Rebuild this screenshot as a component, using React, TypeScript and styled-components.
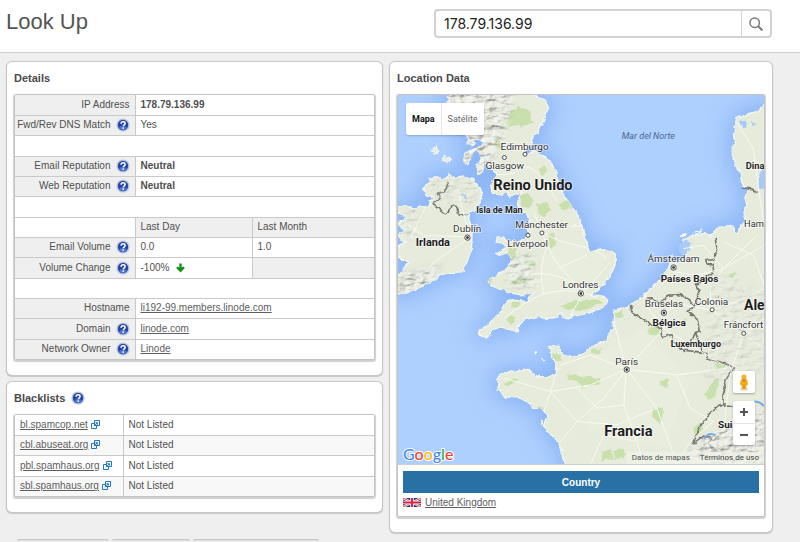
import React from "react";
import styled, { createGlobalStyle } from "styled-components";

const GlobalStyle = createGlobalStyle`
  * { box-sizing: border-box; }
  body {
    margin: 0;
    background: #efefef;
    color: #505050;
    font-family: "Liberation Sans", Arial, sans-serif;
    font-size: 10px;
    overflow: hidden;
  }
`;

const Header = styled.header`
  display: flex;
  justify-content: space-between;
  align-items: flex-start;
  height: 53px;
  padding: 9px 28px 0 6px;
  background: #fff;
  border-bottom: 1px solid #cfcfcf;
`;

const PageTitle = styled.h1`
  margin: 0;
  font-size: 22px;
  line-height: 26px;
  font-weight: 400;
  color: #555;
`;

const SearchForm = styled.form`
  display: flex;
  width: 338px;
  height: 29px;
  border: 2px solid #d2d2d2;
  border-radius: 4px;
  background: #fff;
`;

const SearchInput = styled.input`
  flex: 1;
  min-width: 0;
  padding: 0 8px;
  border: 0;
  outline: 0;
  background: none;
  color: #222;
  font: 14px Inter, sans-serif;
`;

const SearchButton = styled.button`
  display: flex;
  align-items: center;
  justify-content: center;
  width: 29px;
  padding: 0;
  border: 0;
  border-left: 1px solid #d2d2d2;
  background: none;
`;

const Columns = styled.main`
  display: grid;
  grid-template-columns: 375fr 382fr;
  align-items: start;
  gap: 8px;
  padding: 9px 28px 0 7px;
`;

const Stack = styled.div`
  display: flex;
  flex-direction: column;
  gap: 7px;
`;

const Panel = styled.section`
  padding: 0 7px 15px;
  background: #fff;
  border-radius: 5px;
  box-shadow: 0 0 1px 1px #c6c6c6, 0 1px 1px 1px #c6c6c6;
`;

const PanelTitle = styled.h2`
  display: flex;
  align-items: center;
  gap: 6px;
  height: 32px;
  margin: 0;
  font-size: 11px;
  font-weight: 700;
  color: #4a4a4a;
`;

const Frame = styled.div`
  border: 1px solid #c4c4c4;
  border-radius: 2px;
  box-shadow: 0 1px 1px 1px #d0d0d0;
  overflow: hidden;
`;

const Table = styled.table`
  width: 100%;
  table-layout: fixed;
  border-collapse: collapse;
  line-height: 14px;

  tr { height: 20px; }
  tr:nth-child(3n) { height: 21px; }
  tr + tr > * { border-top: 1px solid #c9c9c9; }
`;

const LabelCell = styled.th`
  padding: 0 5px;
  background: #efefef;
  font-weight: 400;
  text-align: right;
  white-space: nowrap;
`;

const LabelContent = styled.span`
  display: flex;
  align-items: center;
  justify-content: flex-end;
  gap: 5px;
`;

const Cell = styled.td<{ $shaded?: boolean; $bold?: boolean }>`
  padding: 0 5px;
  border-left: 1px solid #c9c9c9;
  background: ${(p) => (p.$shaded ? "#efefef" : "transparent")};
  font-weight: ${(p) => (p.$bold ? 700 : 400)};
`;

const HeadCell = styled.th`
  padding: 0 5px;
  border-left: 1px solid #c9c9c9;
  background: #efefef;
  font-weight: 400;
  text-align: left;
`;

const BlankCell = styled.td`
  padding: 0;
`;

const ListRow = styled.tr<{ $striped: boolean }>`
  background: ${(p) => (p.$striped ? "#f8f8f8" : "#fff")};
`;

const ListName = styled.th`
  padding: 0 5px;
  font-weight: 400;
  text-align: left;
  white-space: nowrap;

  svg { margin-left: 3px; vertical-align: -1px; }
`;

const Link = styled.a`
  color: #606060;
  text-decoration: underline;
`;

const HelpButton = styled.button`
  display: inline-flex;
  padding: 0;
  border: 0;
  background: none;
`;

const Change = styled.span`
  display: flex;
  align-items: center;
  gap: 7px;
`;

const MapBox = styled.div`
  position: relative;
  height: 370px;
  border-bottom: 1px solid #cfcfcf;
  background: #aed0ff;
  font-family: Roboto, sans-serif;
`;

const MapSvg = styled.svg`
  display: block;
  width: 100%;
  height: 100%;
`;

const MapTypes = styled.div`
  position: absolute;
  top: 8px;
  left: 8px;
  display: flex;
  height: 32px;
  background: #fff;
  border-radius: 2px;
  box-shadow: 0 1px 2px rgba(0, 0, 0, 0.2);
`;

const MapType = styled.button<{ $active?: boolean }>`
  padding: 0 6px;
  border: 0;
  background: none;
  font: ${(p) => (p.$active ? 700 : 400)} 9px Roboto, sans-serif;
  color: ${(p) => (p.$active ? "#111" : "#666")};

  & + & { border-left: 1px solid #e8e8e8; }
`;

const MapTools = styled.div`
  position: absolute;
  right: 9px;
  bottom: 19px;
  display: flex;
  flex-direction: column;
  gap: 8px;
`;

const ToolGroup = styled.div`
  display: flex;
  flex-direction: column;
  background: #fff;
  border-radius: 2px;
  box-shadow: 0 1px 2px rgba(0, 0, 0, 0.3);
`;

const ToolButton = styled.button`
  display: flex;
  align-items: center;
  justify-content: center;
  width: 22px;
  height: 22px;
  padding: 0;
  border: 0;
  background: none;

  & + & { border-top: 1px solid #e6e6e6; }
`;

const MapTerms = styled.div`
  position: absolute;
  right: 0;
  bottom: 0;
  display: flex;
  gap: 10px;
  padding: 0 5px;
  background: rgba(240, 242, 232, 0.7);
  font-size: 8px;
  line-height: 12px;
`;

const TermsLink = styled.a`
  color: #444;
  text-decoration: none;
`;

const CountryBlock = styled.div`
  padding: 6px 5px 5px;
`;

const CountryTable = styled.table`
  width: 100%;
  border-collapse: collapse;

  th {
    height: 22px;
    padding: 0;
    background: #2871a5;
    color: #fff;
    font-size: 10px;
  }

  td { height: 18px; padding: 0; }
`;

const Country = styled.span`
  display: flex;
  align-items: center;
  gap: 4px;
`;

const TabStrip = styled.nav`
  display: grid;
  grid-template-columns: 92px 78px 126px;
  gap: 3px;
  padding: 7px 17px 0;
`;

const TabTop = styled.div`
  height: 2px;
  border-top: 1px solid #c8c8c8;
  border-radius: 3px 3px 0 0;
  background: #dedede;
`;

function Help({ topic }: { topic: string }) {
  return (
    <HelpButton type="button" aria-label={`Help: ${topic}`}>
      <svg width="14" height="14" viewBox="0 0 14 14">
        <circle cx="7" cy="7" r="6.6" fill="#b9c6e3" />
        <circle cx="7" cy="7" r="5.2" fill="#2645a3" />
        <ellipse cx="7" cy="10" rx="3.6" ry="1.9" fill="#4f77cf" />
        <path d="M5.1 5.7c0-1.2.8-1.9 2-1.9s2 .7 2 1.7c0 1.3-1.8 1.4-1.8 2.7" fill="none" stroke="#fff" strokeWidth="1.5" />
        <circle cx="7.2" cy="10.1" r=".9" fill="#fff" />
      </svg>
    </HelpButton>
  );
}

function ExternalIcon() {
  return (
    <svg width="9" height="9" viewBox="0 0 9 9" fill="none" stroke="#1f78c8" aria-hidden="true">
      <path d="M3.5.5h5v5h-5zM3 3.5H.5v5h5V6" />
      <path d="M3 6.2 6.2 3M4.4 2.7h2v2" />
    </svg>
  );
}

function DownArrow() {
  return (
    <svg width="9" height="10" viewBox="0 0 9 10" aria-hidden="true">
      <path d="M3.3.5h2.4v4L7.4 3.6 8.8 5 4.5 9.5.2 5l1.4-1.4 1.7.9z" fill="#149014" />
    </svg>
  );
}

function Flag() {
  return (
    <svg width="18" height="9" viewBox="0 0 18 9" aria-hidden="true">
      <path d="M0 0h18v9H0z" fill="#26357f" />
      <path d="m0 0 18 9M18 0 0 9" stroke="#fff" strokeWidth="2.2" />
      <path d="m0 0 18 9M18 0 0 9" stroke="#d33a4f" strokeWidth=".9" />
      <path d="M9 0v9M0 4.5h18" stroke="#fff" strokeWidth="3.4" />
      <path d="M9 0v9M0 4.5h18" stroke="#d2233c" strokeWidth="1.9" />
    </svg>
  );
}

const LAND = [
  // Great Britain
  "M160 10 178 32 166 48 186 62 176 80 200 96 190 118 222 132 238 150 228 162 250 152 262 150 284 162 262 176 236 186 222 196 216 214 228 224 244 204 252 184 262 190 270 206 258 232 262 256 276 244 284 222 294 226 302 240 316 256 306 276 300 290 304 312 330 318 346 312 360 324 386 312 398 306 386 326 380 346 392 366 410 376 416 396 408 414 416 436 404 452 380 462 354 458 342 444 320 446 316 462 336 468 348 476 330 486 316 496 330 500 350 490 360 502 358 526 344 548 318 560 290 576 298 590 318 598 344 606 372 614 392 622 412 616 430 608 420 622 410 640 378 636 350 638 340 652 328 672 304 696 284 714 264 726 264 740 290 744 308 724 332 716 356 722 376 728 384 706 404 694 438 684 464 690 492 688 508 676 530 688 566 680 610 670 646 652 654 634 640 624 604 618 620 606 642 584 660 560 674 530 675 500 660 486 624 482 598 492 590 482 594 468 580 440 576 416 540 410 570 412 570 396 552 362 530 334 512 306 500 266 492 238 476 214 452 196 424 188 404 196 390 190 412 176 430 164 422 150 440 134 460 94 476 52 468 32 440 22 420 10Z",
  // Ireland
  "M174 256 190 270 216 264 248 272 262 296 272 312 268 342 246 366 232 372 236 398 244 430 242 480 230 520 214 550 180 552 146 560 116 582 80 600 44 614 10 618 10 560 34 548 54 520 22 506 18 480 42 462 22 440 40 424 18 404 48 390 26 372 10 360 40 352 72 358 108 352 128 326 104 316 98 296 118 284 112 268 138 264 156 270Z",
  // Continent
  "M1130 40 1110 62 1072 76 1042 86 1032 112 1034 150 1026 190 1034 232 1050 246 1054 280 1072 300 1066 326 1074 350 1060 370 1068 396 1052 412 1044 438 1022 410 984 416 962 440 944 434 906 440 882 456 874 476 888 496 870 520 850 526 846 500 834 540 814 572 790 590 770 614 720 650 670 666 668 716 648 756 590 782 576 800 548 808 516 800 508 774 476 774 484 800 496 830 494 860 462 866 436 864 420 848 398 842 374 852 338 854 314 872 330 886 318 906 344 926 378 930 408 938 430 958 462 966 470 984 458 1010 474 1034 494 1050 514 1084 516 1110 532 1140 1130 1140Z",
  // Islands
  "M160 200l22 8-10 14-14-8Z M120 184l14-10 10 14-14 8Z M450 1000l5 3-4 4Z M455 812l10 2-4 4Z M432 790l6 1-3 5Z M868 444l18-10-8 12Z M912 430l20-6-6 8Z M232 166l18-8-6 16Z",
];

const PARKS =
  "M345 98 360 70 384 52 420 66 422 104 390 112 356 108Z M314 156 330 152 334 178 314 180Z M390 318 412 312 430 340 412 362 390 346Z M440 346 470 340 480 362 462 386 442 372Z M508 346 528 332 546 352 530 366 508 362Z M444 242 462 232 470 252 452 262Z M474 436 494 430 496 470 478 480Z M350 480 376 478 372 508 352 512Z M400 520 430 514 436 530 410 538Z M360 576 400 566 412 582 372 590Z M362 640 392 640 388 656 364 654Z M348 684 372 680 376 700 356 712Z M508 650 560 636 600 640 584 664 530 664Z M572 640 620 628 640 640 590 662Z M482 790 508 800 516 818 494 818Z M528 858 570 862 598 878 574 900 560 878 532 872Z M338 884 376 868 380 878 344 896Z M440 956 460 960 454 974 442 968Z M570 870 600 866 636 872 626 892 580 894Z M672 670 700 668 696 690 676 690Z M774 718 806 716 800 742 776 738Z M812 874 834 876 830 896 814 892Z M790 960 818 958 816 1006 788 994Z M942 920 960 890 986 868 980 914 956 940Z M978 826 1004 822 1000 844 980 844Z M632 1090 660 1084 668 1112 636 1118Z M666 1086 700 1082 704 1110 672 1112Z M600 784 632 780 622 798 604 796Z M290 570 306 568 302 582 292 582Z M910 1020 940 1000 936 1030 916 1050Z M870 700 890 690 886 716Z M1010 560 1040 556 1030 574Z";

const ROADS =
  "M430 370Q450 420 470 470T540 570T578 612 M300 250Q350 270 390 240T500 340 M455 430Q500 460 560 470T650 510 M400 560Q480 540 560 590 M340 690Q400 640 450 620T570 610 M470 470Q440 540 460 620 M580 612L660 520 M580 612 540 680 M580 612 640 640 M500 540 590 500 M240 445 100 440 40 400 M240 445 130 520 80 590 M200 300 235 440 M60 450 110 340 M708 843 600 800 510 830 M708 843 670 700 M708 843 820 720 840 640 M708 843 860 860 1010 840 M708 843 800 960 860 1128 M708 843 640 930 560 1000 510 1060 M708 843 700 950 740 1060 760 1128 M480 910 600 890 708 843 M340 870 480 910 460 970 M480 910 560 1000 M480 910 500 840 M560 1000 680 1010 800 960 M600 1128 640 1040 740 1060 M860 1128 900 1060 970 1000 M820 720 760 640 M820 720 900 770 1000 830 M850 550 920 560 1000 540 1122 470 M966 665 1060 740 1122 780 M966 665 960 600 1000 540 1100 440 M966 665 880 650 820 670 M1060 740 1020 860 1010 940 1000 1040 M1000 540 940 470 880 480 M1122 600 1040 640 966 665 M1060 740 1122 690 M1040 100 1090 180 1110 330 1122 400 M1000 460 1090 500 1122 590 M860 860 900 960 970 1000 M560 900 620 960 700 950";

const BORDERS =
  "M172 280 164 306 140 314 146 328 124 342 150 364 166 376 176 370 180 348 196 350 206 380 230 376 M975 445 980 480 974 510 950 512 952 526 970 530 974 546 958 560 930 576 916 590 926 610 914 650 M766 630 782 628 796 640 824 636 836 620 870 618 898 634 914 660 M720 650 724 670 742 682 760 696 786 710 810 718 816 750 846 738 846 760 880 786 942 792 954 810 1004 826 1033 836 1012 864 1000 906 998 950 972 960 950 986 926 1024 912 1058 916 1066 M914 650 894 672 908 684 926 696 930 728 916 732 902 762 886 768 M916 732 926 760 934 788 M998 950 1030 952 M908 1066 940 1044 962 1048 956 1070 974 1090 M1058 298 1085 300 1102 310";

interface Label { text: string; x: number; y: number; size: number; bold?: boolean; italic?: boolean }

const LABELS: Label[] = [
  { text: "Edimburgo", x: 402, y: 183, size: 30 },
  { text: "Glasgow", x: 342, y: 241, size: 30 },
  { text: "Reino Unido", x: 427, y: 303, size: 44, bold: true },
  { text: "Isla de Man", x: 326, y: 374, size: 27, bold: true },
  { text: "Mánchester", x: 453, y: 419, size: 30 },
  { text: "Dublín", x: 229, y: 430, size: 30 },
  { text: "Irlanda", x: 126, y: 473, size: 33, bold: true },
  { text: "Liverpool", x: 411, y: 475, size: 30 },
  { text: "Mar del Norte", x: 774, y: 150, size: 27, italic: true },
  { text: "Ámsterdam", x: 850, y: 521, size: 30 },
  { text: "Países Bajos", x: 898, y: 581, size: 30, bold: true },
  { text: "Bruselas", x: 821, y: 657, size: 30 },
  { text: "Colonia", x: 964, y: 651, size: 30 },
  { text: "Bélgica", x: 837, y: 713, size: 30, bold: true },
  { text: "Luxemburgo", x: 917, y: 776, size: 27, bold: true },
  { text: "Londres", x: 570, y: 599, size: 30 },
  { text: "París", x: 709, y: 829, size: 30 },
  { text: "Francia", x: 714, y: 1043, size: 44, bold: true },
];

const EDGE_LABELS: Label[] = [
  { text: "Dina", x: 1067, y: 241, size: 28, bold: true },
  { text: "Ham", x: 1062, y: 414, size: 28 },
  { text: "Ale", x: 1062, y: 665, size: 42, bold: true },
  { text: "Fráncfort", x: 1001, y: 720, size: 29 },
  { text: "Sui", x: 984, y: 1021, size: 30, bold: true },
];

const CITIES = [[341, 206], [403, 196], [412, 440], [454, 433], [966, 664], [1061, 735]];
const CAPITALS = [[230, 447], [571, 615], [850, 537], [821, 673], [709, 844]];

function MapLabel({ label, anchor }: { label: Label; anchor: "start" | "middle" }) {
  return (
    <text
      x={label.x}
      y={label.y}
      fontSize={label.size}
      fontWeight={label.bold ? 700 : 400}
      fontStyle={label.italic ? "italic" : "normal"}
      textAnchor={anchor}
      fill={label.italic ? "#4e6690" : label.bold ? "#1d1d1d" : "#333"}
      stroke={label.italic ? "none" : "#fff"}
      strokeOpacity=".7"
      strokeWidth="5"
      paintOrder="stroke"
    >
      {label.text}
    </text>
  );
}

function EuropeMap() {
  return (
    <MapSvg viewBox="21 18 1101 1110" preserveAspectRatio="xMidYMid slice" role="img" aria-label="Mapa">
      <defs>
        <filter id="coast" x="-10%" y="-10%" width="120%" height="120%">
          <feTurbulence type="fractalNoise" baseFrequency="0.05" numOctaves="3" seed="4" />
          <feDisplacementMap in="SourceGraphic" scale="16" xChannelSelector="R" yChannelSelector="G" />
        </filter>
        <filter id="shelf" x="-10%" y="-10%" width="120%" height="120%">
          <feGaussianBlur stdDeviation="34" />
        </filter>
        <filter id="relief" x="0" y="0" width="100%" height="100%">
          <feTurbulence type="fractalNoise" baseFrequency="0.03 0.06" numOctaves="4" seed="9" result="n" />
          <feDiffuseLighting in="n" surfaceScale="16" lightingColor="#fff" result="l">
            <feDistantLight azimuth="225" elevation="55" />
          </feDiffuseLighting>
          <feComposite in="l" in2="SourceGraphic" operator="in" />
        </filter>
        <filter id="feather"><feGaussianBlur stdDeviation="9" /></filter>
        <mask id="highlands">
          <g fill="#fff" filter="url(#feather)">
            <path d="M140 0H370L350 110 300 220 250 260 200 170Z" />
            <path d="M350 500 430 500 440 600 350 600Z" opacity=".7" />
            <path d="M20 560 160 530 90 610 20 630Z" opacity=".9" />
            <path d="M20 360 90 360 70 450 20 450Z" opacity=".4" />
            <path d="M900 1080 1000 1020 1130 960V1140H900Z" />
            <path d="M960 540 1130 620V880H940Z" opacity=".25" />
            <path d="M120 260 270 270 260 350 130 340Z" opacity=".35" />
          </g>
        </mask>
        <clipPath id="landClip">{LAND.map((d) => <path key={d} d={d} />)}</clipPath>
      </defs>
      <path d="M0 0h1150v1150H0Z" fill="#aed0ff" />
      <g filter="url(#shelf)" fill="#7faaf0" stroke="#7faaf0" strokeWidth="30" opacity=".75">
        {LAND.slice(0, 3).map((d) => <path key={d} d={d} />)}
      </g>
      <g filter="url(#coast)">
        {LAND.map((d) => <path key={d} d={d} fill="#e6ebdb" stroke="#f4f7f0" strokeWidth="4" strokeLinejoin="round" />)}
        <g clipPath="url(#landClip)">
          <path d="M560 470 650 500 600 600 480 630 420 590 480 470Z M560 830 760 720 900 880 820 1080 600 1020Z" fill="#e9edde" />
          <path d={PARKS} fill="#c9e0ac" />
        </g>
        <path d="M214 316 228 318 226 334 214 330Z M868 470 886 456 904 464 898 484 878 500 866 490Z M1050 100 1066 92 1072 110 1058 118Z M1082 96 1102 104 1092 116Z M1108 258 1125 230V300L1104 300Z" fill="#a5cafb" />
        <path d={BORDERS} fill="none" stroke="#777972" strokeWidth="5" strokeLinejoin="round" />
      </g>
      <g clipPath="url(#landClip)">
        <path d={ROADS} fill="none" stroke="#f8faf2" strokeWidth="3" />
        <g mask="url(#highlands)">
          <path d="M0 0h1150v1150H0Z" filter="url(#relief)" opacity=".5" />
        </g>
      </g>
      <path d="M942 1052q14-22 34-10M1092 940q18 0 30 14" fill="none" stroke="#7aa7e8" strokeWidth="6" />
      <g fill="#fff" stroke="#4a4a4a" strokeWidth="3">
        {CITIES.map(([x, y]) => <circle key={x} cx={x} cy={y} r="6" />)}
        {CAPITALS.map(([x, y]) => <circle key={x} cx={x} cy={y} r="8" />)}
      </g>
      {CAPITALS.map(([x, y]) => <circle key={x} cx={x} cy={y} r="4" fill="#222" />)}
      {LABELS.map((l) => <MapLabel key={l.text} label={l} anchor="middle" />)}
      {EDGE_LABELS.map((l) => <MapLabel key={l.text} label={l} anchor="start" />)}
    </MapSvg>
  );
}

const GoogleMark = styled.div`
  position: absolute;
  left: 5px;
  bottom: 0;
  font: 500 16px/21px Lato, sans-serif;
  -webkit-text-stroke: 2px #fff;
  paint-order: stroke fill;
`;

const Letter = styled.span<{ $color: string }>`
  color: ${(p) => p.$color};
`;

const GOOGLE: [string, string][] = [
  ["G", "#4285f4"], ["o", "#ea4335"], ["o", "#fbbc05"], ["g", "#4285f4"], ["l", "#34a853"], ["e", "#ea4335"],
];

function LocationMap() {
  return (
    <MapBox>
      <EuropeMap />
      <MapTypes>
        <MapType type="button" $active>Mapa</MapType>
        <MapType type="button">Satélite</MapType>
      </MapTypes>
      <GoogleMark>
        {GOOGLE.map(([ch, color], i) => <Letter key={i} $color={color}>{ch}</Letter>)}
      </GoogleMark>
      <MapTools>
        <ToolGroup>
          <ToolButton type="button" aria-label="Street View">
            <svg width="12" height="17" viewBox="0 0 12 17">
              <ellipse cx="6" cy="15.3" rx="4" ry="1.2" fill="#d8d0b8" />
              <circle cx="6" cy="3" r="2.6" fill="#f5b52a" />
              <path d="M3 5.6h6l1.2 5-1.6.5L8 15H4l-.6-3.9-1.6-.5z" fill="#efaa20" />
              <path d="M4.2 5.6h3.6L6 7.6zM6 10v5" fill="#c98512" stroke="#c98512" strokeWidth=".6" />
            </svg>
          </ToolButton>
        </ToolGroup>
        <ToolGroup>
          <ToolButton type="button" aria-label="Zoom in">
            <svg width="8" height="8" viewBox="0 0 8 8"><path d="M4 0v8M0 4h8" stroke="#555" strokeWidth="2" /></svg>
          </ToolButton>
          <ToolButton type="button" aria-label="Zoom out">
            <svg width="8" height="8" viewBox="0 0 8 8"><path d="M0 4h8" stroke="#555" strokeWidth="2" /></svg>
          </ToolButton>
        </ToolGroup>
      </MapTools>
      <MapTerms>
        <span>Datos de mapas</span>
        <TermsLink href="#terms">Términos de uso</TermsLink>
      </MapTerms>
    </MapBox>
  );
}

function RowLabel({ text, help }: { text: string; help?: boolean }) {
  return (
    <LabelCell scope="row">
      <LabelContent>
        {text}
        {help && <Help topic={text} />}
      </LabelContent>
    </LabelCell>
  );
}

const BLACKLISTS = ["bl.spamcop.net", "cbl.abuseat.org", "pbl.spamhaus.org", "sbl.spamhaus.org"];

export default function App() {
  return (
    <>
      <GlobalStyle />
      <Header>
        <PageTitle>Look Up</PageTitle>
        <SearchForm onSubmit={(e) => e.preventDefault()}>
          <SearchInput aria-label="IP address" defaultValue="178.79.136.99" />
          <SearchButton type="submit" aria-label="Search">
            <svg width="14" height="14" viewBox="0 0 14 14" fill="none" stroke="#777" strokeWidth="1.5">
              <circle cx="5.7" cy="5.7" r="4.7" />
              <path d="m9.2 9.2 4.2 4.2" strokeWidth="2" />
            </svg>
          </SearchButton>
        </SearchForm>
      </Header>
      <Columns>
        <Stack>
          <Panel>
            <PanelTitle>Details</PanelTitle>
            <Frame>
              <Table>
                <colgroup><col width="120" /><col width="117" /><col /></colgroup>
                <tbody>
                  <tr><RowLabel text="IP Address" /><Cell colSpan={2} $bold>178.79.136.99</Cell></tr>
                  <tr><RowLabel text="Fwd/Rev DNS Match" help /><Cell colSpan={2}>Yes</Cell></tr>
                  <tr><BlankCell colSpan={3} /></tr>
                  <tr><RowLabel text="Email Reputation" help /><Cell colSpan={2} $bold>Neutral</Cell></tr>
                  <tr><RowLabel text="Web Reputation" help /><Cell colSpan={2} $bold>Neutral</Cell></tr>
                  <tr><BlankCell colSpan={3} /></tr>
                  <tr><BlankCell /><HeadCell scope="col">Last Day</HeadCell><HeadCell scope="col">Last Month</HeadCell></tr>
                  <tr><RowLabel text="Email Volume" help /><Cell>0.0</Cell><Cell>1.0</Cell></tr>
                  <tr><RowLabel text="Volume Change" help /><Cell><Change>-100% <DownArrow /></Change></Cell><Cell $shaded /></tr>
                  <tr><BlankCell colSpan={3} /></tr>
                  <tr><RowLabel text="Hostname" /><Cell colSpan={2}><Link href="#hostname">li192-99.members.linode.com</Link></Cell></tr>
                  <tr><RowLabel text="Domain" help /><Cell colSpan={2}><Link href="#domain">linode.com</Link></Cell></tr>
                  <tr><RowLabel text="Network Owner" help /><Cell colSpan={2}><Link href="#owner">Linode</Link></Cell></tr>
                </tbody>
              </Table>
            </Frame>
          </Panel>
          <Panel>
            <PanelTitle>Blacklists <Help topic="Blacklists" /></PanelTitle>
            <Frame>
              <Table>
                <colgroup><col width="108" /><col /></colgroup>
                <tbody>
                  {BLACKLISTS.map((name, i) => (
                    <ListRow key={name} $striped={i % 2 === 1}>
                      <ListName scope="row"><Link href={`#${name}`}>{name}</Link><ExternalIcon /></ListName>
                      <Cell>Not Listed</Cell>
                    </ListRow>
                  ))}
                </tbody>
              </Table>
            </Frame>
          </Panel>
        </Stack>
        <Panel>
          <PanelTitle>Location Data</PanelTitle>
          <Frame>
            <LocationMap />
            <CountryBlock>
              <CountryTable>
                <thead><tr><th scope="col">Country</th></tr></thead>
                <tbody><tr><td><Country><Flag /><Link href="#country">United Kingdom</Link></Country></td></tr></tbody>
              </CountryTable>
            </CountryBlock>
          </Frame>
        </Panel>
      </Columns>
      <TabStrip><TabTop /><TabTop /><TabTop /></TabStrip>
    </>
  );
}
